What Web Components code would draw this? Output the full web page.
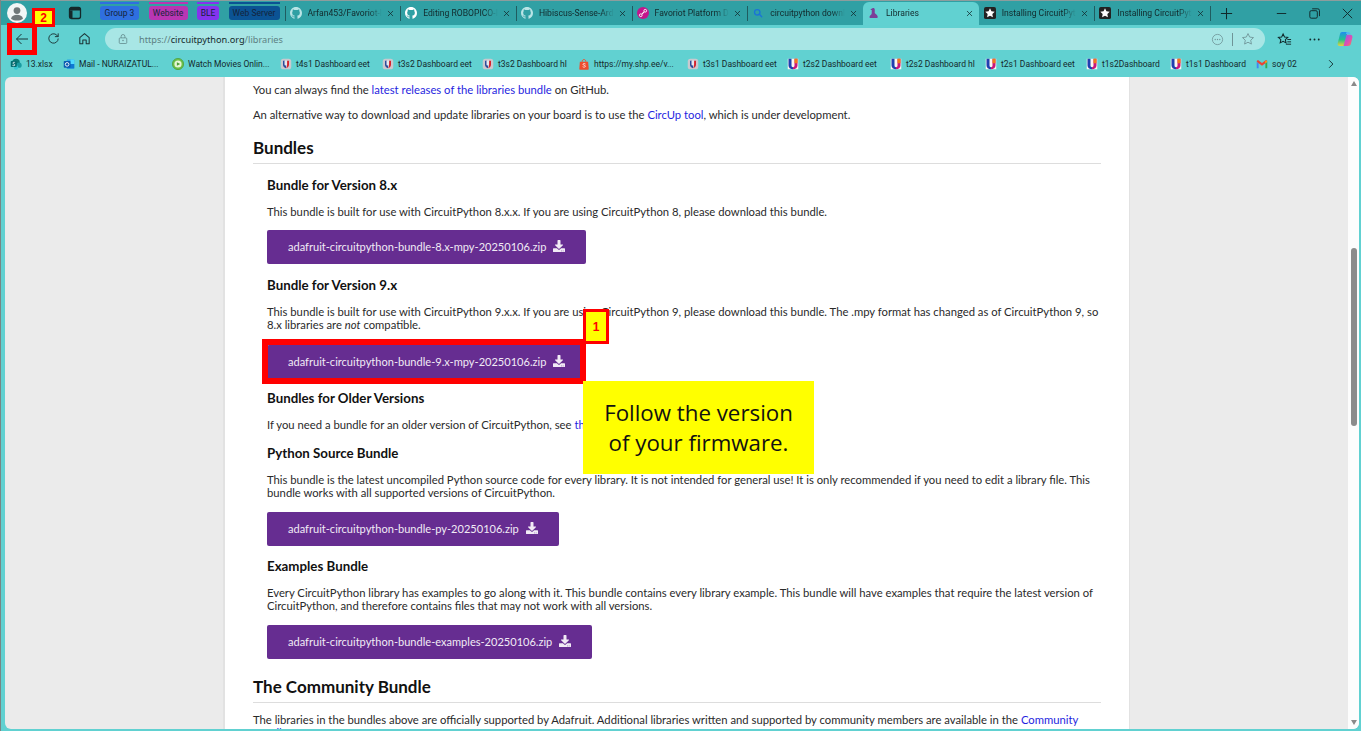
<!DOCTYPE html>
<html>
<head>
<meta charset="utf-8">
<title>Libraries</title>
<style>
  html, body { margin: 0; padding: 0; width: 1361px; height: 731px; overflow: hidden; background: #61d1d1; }
</style>
</head>
<body>
<browser-window>
  <tab-strip slot="tabs">
    <tab-chip color="#2f6fe0" width="39">Group 3</tab-chip>
    <tab-chip color="#b936b3" width="39">Website</tab-chip>
    <tab-chip color="#8533ee" width="22">BLE</tab-chip>
    <tab-chip color="#0b5394" width="51">Web Server</tab-chip>
    <browser-tab icon="github-dim">Arfan453/Favoriot-IoT</browser-tab>
    <browser-tab icon="github">Editing ROBOPICO-IoT</browser-tab>
    <browser-tab icon="github-dim">Hibiscus-Sense-Arduino</browser-tab>
    <browser-tab icon="favoriot">Favoriot Platform Docs</browser-tab>
    <browser-tab icon="search">circuitpython download</browser-tab>
    <browser-tab icon="blinka" active>Libraries</browser-tab>
    <browser-tab icon="star-box" nosep>Installing CircuitPython</browser-tab>
    <browser-tab icon="star-box">Installing CircuitPython</browser-tab>
  </tab-strip>
  <nav-bar slot="nav"></nav-bar>
  <bookmark-bar slot="bookmarks">
    <book-mark icon="sharepoint" width="53">13.xlsx</book-mark>
    <book-mark icon="outlook" width="109">Mail - NURAIZATUL...</book-mark>
    <book-mark icon="movie" width="108">Watch Movies Onlin...</book-mark>
    <book-mark icon="u-gray" width="102">t4s1 Dashboard eet</book-mark>
    <book-mark icon="u-gray" width="100">t3s2 Dashboard eet</book-mark>
    <book-mark icon="u-gray" width="96">t3s2 Dashboard hl</book-mark>
    <book-mark icon="shopee" width="109">https://my.shp.ee/v...</book-mark>
    <book-mark icon="u-gray" width="100">t3s1 Dashboard eet</book-mark>
    <book-mark icon="u-color" width="103">t2s2 Dashboard eet</book-mark>
    <book-mark icon="u-color" width="95">t2s2 Dashboard hl</book-mark>
    <book-mark icon="u-color" width="101">t2s1 Dashboard eet</book-mark>
    <book-mark icon="u-color" width="84">t1s2Dashboard</book-mark>
    <book-mark icon="u-color" width="86">t1s1 Dashboard</book-mark>
    <book-mark icon="gmail" width="50">soy 02</book-mark>
  </bookmark-bar>
  <doc-page slot="page">
    <doc-p style="margin-top:0">You can always find the <a href="#">latest releases of the libraries bundle</a> on GitHub.</doc-p>
    <doc-p style="margin-top:11px">An alternative way to download and update libraries on your board is to use the <a href="#">CircUp tool</a>, which is under development.</doc-p>
    <doc-h2 style="margin-top:16px">Bundles</doc-h2>
    <bundle-block>
      <doc-h3>Bundle for Version 8.x</doc-h3>
      <doc-p>This bundle is built for use with CircuitPython 8.x.x. If you are using CircuitPython 8, please download this bundle.</doc-p>
      <dl-button style="margin-top:11px">adafruit-circuitpython-bundle-8.x-mpy-20250106.zip</dl-button>
      <doc-h3>Bundle for Version 9.x</doc-h3>
      <doc-p>This bundle is built for use with CircuitPython 9.x.x. If you are using CircuitPython 9, please download this bundle. The .mpy format has changed as of CircuitPython 9, so 8.x libraries are <em>not</em> compatible.</doc-p>
      <dl-button style="margin-top:13px">adafruit-circuitpython-bundle-9.x-mpy-20250106.zip</dl-button>
      <doc-h3 style="margin-top:11px">Bundles for Older Versions</doc-h3>
      <doc-p>If you need a bundle for an older version of CircuitPython, see <a href="#">the</a></doc-p>
      <doc-h3>Python Source Bundle</doc-h3>
      <doc-p>This bundle is the latest uncompiled Python source code for every library. It is not intended for general use! It is only recommended if you need to edit a library file. This bundle works with all supported versions of CircuitPython.</doc-p>
      <dl-button>adafruit-circuitpython-bundle-py-20250106.zip</dl-button>
      <doc-h3 style="margin-top:12px">Examples Bundle</doc-h3>
      <doc-p>Every CircuitPython library has examples to go along with it. This bundle contains every library example. This bundle will have examples that require the latest version of CircuitPython, and therefore contains files that may not work with all versions.</doc-p>
      <dl-button>adafruit-circuitpython-bundle-examples-20250106.zip</dl-button>
    </bundle-block>
    <doc-h2 style="margin-top:18px">The Community Bundle</doc-h2>
    <doc-p style="margin-top:10px">The libraries in the bundles above are officially supported by Adafruit. Additional libraries written and supported by community members are available in the <a href="#">Community Bundle</a>.</doc-p>
  </doc-page>
</browser-window>

<mark-box style="left:262px;top:339px;width:324px;height:45px"></mark-box>
<mark-box style="left:7px;top:23px;width:30px;height:32px" thick="5"></mark-box>
<mark-tag style="left:583px;top:309px;width:26px;height:35px">1</mark-tag>
<mark-tag style="left:32px;top:8px;width:23px;height:19px">2</mark-tag>
<note-box style="left:583px;top:381px;width:231px;height:93px">Follow the version<br>of your firmware.</note-box>

<script>
const OCTOCAT = 'M8 0C3.58 0 0 3.58 0 8c0 3.54 2.29 6.53 5.47 7.59.4.07.55-.17.55-.38 0-.19-.01-.82-.01-1.49-2.01.37-2.53-.49-2.69-.94-.09-.23-.48-.94-.82-1.13-.28-.15-.68-.52-.01-.53.63-.01 1.08.58 1.23.82.72 1.21 1.87.87 2.33.66.07-.52.28-.87.51-1.07-1.78-.2-3.64-.89-3.64-3.95 0-.87.31-1.59.82-2.15-.08-.2-.36-1.02.08-2.12 0 0 .67-.21 2.2.82.64-.18 1.32-.27 2-.27s1.36.09 2 .27c1.53-1.04 2.2-.82 2.2-.82.44 1.1.16 1.92.08 2.12.51.56.82 1.27.82 2.15 0 3.07-1.87 3.75-3.65 3.95.29.25.54.73.54 1.48 0 1.07-.01 1.93-.01 2.2 0 .21.15.46.55.38A8.013 8.013 0 0016 8c0-4.42-3.58-8-8-8z';

// every icon is on a 16x16 box unless it says otherwise
const ICONS = {
  'github': `<path fill="#fff" d="${OCTOCAT}"/>`,
  'github-dim': `<path fill="#b9e4e6" d="${OCTOCAT}"/>`,
  'favoriot': `<circle cx="8" cy="8" r="8" fill="#c4148c"/><path d="M6.500 9.500L9.500 6.500" stroke="#fff" stroke-width="1.400"/><circle cx="5" cy="11" r="1.800" fill="none" stroke="#fff" stroke-width="1.200"/><circle cx="11" cy="5" r="1.800" fill="none" stroke="#fff" stroke-width="1.200"/>`,
  'search': `<circle cx="7" cy="7" r="3.600" fill="none" stroke="#1a73d8" stroke-width="1.800"/><path d="M9.800 9.800L13 13" stroke="#1a73d8" stroke-width="1.800" stroke-linecap="round"/>`,
  'blinka': `<path fill="#7b3f98" d="M6 1.500c1.600-.8 3 .2 3 1.700V8c0 1 3.500 2 4 5 .2 1.200-.6 1.800-2 1.800H4C2.500 14.800 1.700 14 2 13c.5-1.700 3-2.800 3-4.600V4H3.200C3.600 3 5 2 6 1.500z"/>`,
  'star-box': `<rect x="0" y="0" width="16" height="16" rx="2.500" fill="#222"/><path fill="#fff" d="M8 1.800l1.900 4 4.400.5-3.200 3 .8 4.400L8 11.600l-3.900 2.100.8-4.400-3.200-3 4.400-.5z"/>`,
  'sharepoint': `<circle cx="8" cy="6" r="5" fill="#0b7a75"/><circle cx="12" cy="9.500" r="3.600" fill="#1a9ba1"/><circle cx="8" cy="12.500" r="3" fill="#37c6d0"/><rect x="1" y="4" width="8" height="8" rx="1" fill="#036c70"/><path d="M6.800 6.200C6 5.500 3.800 5.600 3.800 6.800S6.600 8 6.600 9.300 4 10.500 3.200 9.700" fill="none" stroke="#fff" stroke-width="1"/>`,
  'outlook': `<rect x="5" y="2" width="10" height="12" rx="1" fill="#28a8ea"/><rect x="10" y="2" width="5" height="6" fill="#50d9ff"/><rect x="5" y="8" width="10" height="6" fill="#0f78d4"/><rect x="1" y="4" width="9" height="9" rx="1" fill="#0a5cb0"/><circle cx="5.500" cy="8.500" r="2.400" fill="none" stroke="#fff" stroke-width="1.200"/>`,
  'movie': `<circle cx="8" cy="8" r="7.500" fill="#6cc04a" stroke="#4f9c36"/><circle cx="8" cy="8" r="4.800" fill="#e7f5d8"/><path d="M6.500 5.600L11 8l-4.500 2.400z" fill="#4f9c36"/>`,
  'u-gray': `<rect x="1" y="1" width="14" height="14" rx="3.500" fill="#c9c9cf"/><path d="M4 3.500v5.200c0 3 2 4.500 4 4.800V3.500z" fill="#2c4c9c"/><path d="M12 3.500v5.200c0 3-2 4.500-4 4.800 1-1 1.400-2.500 1.400-4V3.500z" fill="#d5232d"/><rect x="6" y="3" width="3.400" height="7" rx="1.500" fill="#e8e8ee"/>`,
  'u-color': `<rect x="1" y="1" width="14" height="14" fill="#fbf7f2"/><path d="M2 1h4v9c0 1.500.8 2.300 2 2.300V15c-3.500 0-6-1.800-6-5z" fill="#1f3fb0"/><path d="M10 1h4v9c0 3.200-2.500 5-6 5v-2.700c1.200 0 2-.8 2-2.300z" fill="#c8187c"/><path d="M10 1h4v6h-4z" fill="#f07a1a"/>`,
  'shopee': `<path d="M2.500 5h11l.8 9.500c0 .6-.5 1-1 1H2.700c-.5 0-1-.4-1-1z" fill="#ee4d2d"/><path d="M5.500 5C5.500 1 10.500 1 10.500 5" fill="none" stroke="#ee4d2d" stroke-width="1.200"/><path d="M10 8c-.8-.9-3.400-.8-3.400.5s3.400 1 3.400 2.500-2.900 1.500-3.800.6" fill="none" stroke="#fff" stroke-width="1"/>`,
  'gmail': `<path d="M1 5v8.500h2.500V7z" fill="#4285f4"/><path d="M15 5v8.500h-2.500V7z" fill="#34a853"/><path d="M1 5c0-1.800 1.800-2.300 3-1.400L8 6.700l4-3.100c1.200-.9 3-.4 3 1.400L12.500 7 8 10.300 3.500 7z" fill="#ea4335"/><path d="M12.500 3.300l2.500 1.700-2.500 2z" fill="#fbbc04"/>`,
  'person': `<circle cx="8" cy="8" r="8" fill="#f2f6f6"/><circle cx="8" cy="6" r="2.700" fill="#6f7778"/><path d="M3.200 12.500c.5-2.400 2.500-3.200 4.800-3.200s4.300.8 4.800 3.200c-1.200 1-3 1.500-4.800 1.500s-3.600-.5-4.800-1.500z" fill="#6f7778"/>`,
  'tabs': `<rect x="2.500" y="2.500" width="11" height="11" rx="2" fill="none" stroke="#14282a" stroke-width="1.300"/><path d="M2.500 5.500h11v-1a2 2 0 00-2-2h-7a2 2 0 00-2 2z" fill="#14282a"/><rect x="2.500" y="5.500" width="3" height="8" fill="#14282a"/>`,
  'back': `<path d="M14 8H2.500M7.500 3L2.500 8l5 5" fill="none" stroke="#1d3436" stroke-width="1"/>`,
  'reload': `<path d="M13 8a5 5 0 11-1.500-3.600L13 6M13 2.500V6H9.500" fill="none" stroke="#1d3436" stroke-width="1"/>`,
  'home': `<path d="M3 7l5-4.300L13 7v6.500H9.800V9.500H6.200v4H3z" fill="none" stroke="#1d3436" stroke-width="1.100" stroke-linejoin="round"/>`,
  'lock': `<rect x="3" y="6.500" width="10" height="7.500" rx="1.200" fill="none" stroke="#5d8487" stroke-width="1"/><path d="M5.500 6.500V4.500a2.500 2.500 0 015 0v2" fill="none" stroke="#5d8487"/><circle cx="8" cy="10" r=".9" fill="#5d8487"/>`,
  'page-info': `<circle cx="8" cy="8" r="6.300" fill="none" stroke="#6f9497" stroke-width="1"/><circle cx="5.200" cy="8" r=".8" fill="#6f9497"/><circle cx="8" cy="8" r=".8" fill="#6f9497"/><circle cx="10.800" cy="8" r=".8" fill="#6f9497"/>`,
  'star': `<path d="M8 1.800l1.900 4 4.400.6-3.200 3 .8 4.400L8 11.700l-3.900 2.100.8-4.400-3.200-3 4.400-.6z" fill="none" stroke="#6f9497" stroke-width="1"/>`,
  'fav-list': `<path d="M6.500 2l1.500 3.300 3.500.4-2.600 2.400.7 3.500-3.100-1.700-3.100 1.700.7-3.500L1.500 5.700 5 5.300z" fill="none" stroke="#10282a" stroke-width="1.100"/><path d="M11 8h4M11 10.500h4M9.500 13h5.500" stroke="#10282a" stroke-width="1"/>`,
  'more': `<circle cx="3.500" cy="8" r="1" fill="#10282a"/><circle cx="8" cy="8" r="1" fill="#10282a"/><circle cx="12.500" cy="8" r="1" fill="#10282a"/>`,
  'copilot': `<defs><linearGradient id="cp1" x1="0" y1="0" x2="0" y2="1"><stop offset="0" stop-color="#1f8ff0"/><stop offset=".55" stop-color="#23c48c"/><stop offset="1" stop-color="#e9d33a"/></linearGradient><linearGradient id="cp2" x1="0" y1="0" x2="1" y2="1"><stop offset="0" stop-color="#8a5cf0"/><stop offset=".6" stop-color="#e24fb0"/><stop offset="1" stop-color="#f58a3a"/></linearGradient></defs><path d="M5 1h5.500L7.500 15H3C1.200 15 .3 13.800.7 12.300L3 3C3.300 1.800 4 1 5 1z" fill="url(#cp1)"/><path d="M6.500 15H11c1.500 0 2.500-1 2.900-2.300L15.400 6.500c.3-1.600-.7-2.700-2-2.700H9.500z" fill="url(#cp2)"/><path d="M9.500 1h1.700c1.300 0 2.100.8 2.300 2H9z" fill="#4fb8f4"/>`,
  'chevron': `<path d="M5.500 3l5 5-5 5" fill="none" stroke="#10282a" stroke-width="1.200"/>`,
  'plus': `<path d="M8 2v12M2 8h12" stroke="#10282a" stroke-width="1.100"/>`,
  'minus': `<path d="M3 8h10" stroke="#10282a" stroke-width="1"/>`,
  'restore': `<rect x="3" y="5" width="8" height="8" rx="1.500" fill="none" stroke="#10282a" stroke-width="1"/><path d="M5.500 3h6a1.800 1.800 0 011.800 1.800v6" fill="none" stroke="#10282a" stroke-width="1"/>`,
  'close': `<path d="M3 3l10 10M13 3L3 13" stroke="#10282a" stroke-width="1"/>`,
  'tab-close': `<path d="M3.500 3.500l9 9M12.500 3.500l-9 9" stroke="#10282a" stroke-width="1.300"/>`,
  'download': `<path transform="scale(.03125)" fill="currentColor" d="M216 0h80c13.300 0 24 10.700 24 24v168h87.700c17.800 0 26.700 21.500 14.100 34.100L269.700 378.300c-7.500 7.500-19.800 7.500-27.300 0L90.100 226.100c-12.600-12.600-3.700-34.100 14.100-34.100H192V24c0-13.300 10.700-24 24-24zm296 376v112c0 13.300-10.700 24-24 24H24c-13.300 0-24-10.700-24-24V376c0-13.300 10.700-24 24-24h146.700l49 49c20.100 20.100 52.500 20.100 72.600 0l49-49H488c13.300 0 24 10.700 24 24zm-124 88c0-11-9-20-20-20s-20 9-20 20 9 20 20 20 20-9 20-20zm64 0c0-11-9-20-20-20s-20 9-20 20 9 20 20 20 20-9 20-20z"/>`
};

function svgIcon(name, size) {
  return `<svg width="${size}" height="${size}" viewBox="0 0 16 16" style="display:block;flex:none">${ICONS[name]}</svg>`;
}

const CHROME_FONT = `Roboto, "Noto Sans", sans-serif`;
const PAGE_FONT = `Lato, Inter, sans-serif`;

class BrowserWindow extends HTMLElement {
  connectedCallback() {
    this.attachShadow({ mode: 'open' });
    this.shadowRoot.innerHTML = `
      <style>
        :host { display: flex; flex-direction: column; width: 1361px; height: 731px; background: #61d1d1; border-left: 1px solid #7a8585; box-sizing: border-box; font-family: ${CHROME_FONT}; }
        .view { flex: 1; min-height: 0; padding: 0 2px 2px 4px; display: flex; }
      </style>
      <slot name="tabs"></slot>
      <slot name="nav"></slot>
      <slot name="bookmarks"></slot>
      <div class="view"><slot name="page"></slot></div>
    `;
  }
}

class TabStrip extends HTMLElement {
  connectedCallback() {
    this.attachShadow({ mode: 'open' });
    this.shadowRoot.innerHTML = `
      <style>
        :host { display: flex; align-items: flex-end; height: 25px; padding-left: 6px; background: #30a0a4; border-top: 1px solid #8d9d9d; box-sizing: border-box; }
        .icon { align-self: center; margin-bottom: 1px; }
        .profile { margin-right: 40px; }
        .tabview { margin-right: 17px; }
        .chips { display: flex; align-self: flex-start; gap: 9.500px; margin: 1px 5px 0 0; }
        .plus { align-self: center; margin: 0 40px 0 8px; }
        .sep { align-self: center; width: 1px; height: 15px; background: #1f5c60; margin-left: -0.500px; }
        .ctrl { align-self: center; display: flex; gap: 18px; }
      </style>
      <div class="icon profile">${svgIcon('person', 20)}</div>
      <div class="icon tabview">${svgIcon('tabs', 16)}</div>
      <div class="chips"><slot name="chip"></slot></div>
      <slot></slot>
      <div class="sep"></div>
      <div class="plus">${svgIcon('plus', 15)}</div>
      <div class="ctrl">${svgIcon('minus', 15)}${svgIcon('restore', 15)}${svgIcon('close', 15)}</div>
    `;
    this.querySelectorAll('tab-chip').forEach(c => c.slot = 'chip');
  }
}

class TabChip extends HTMLElement {
  connectedCallback() {
    const color = this.getAttribute('color');
    const w = this.getAttribute('width');
    this.attachShadow({ mode: 'open' });
    this.shadowRoot.innerHTML = `
      <style>
        :host { display: block; width: ${w}px; }
        .line { height: 1.500px; background: ${color}; margin-bottom: 2.500px; }
        .body { height: 14px; background: ${color}; border-radius: 3px; color: #14243a; font-size: 8.500px; line-height: 14px; text-align: center; white-space: nowrap; overflow: hidden; }
      </style>
      <div class="line"></div>
      <div class="body"><slot></slot></div>
    `;
  }
}

class BrowserTab extends HTMLElement {
  connectedCallback() {
    const active = this.hasAttribute('active');
    const sep = !active && !this.hasAttribute('nosep');
    this.attachShadow({ mode: 'open' });
    this.shadowRoot.innerHTML = `
      <style>
        :host { display: flex; align-items: center; width: 115.700px; height: 23px; box-sizing: border-box; padding: 0 5px 1px 0; ${active ? 'background:#61d1d1;border-radius:6px 6px 0 0;' : ''} }
        .sep { width: 1px; height: 15px; background: ${sep ? '#1f5c60' : 'transparent'}; margin-right: 4px; flex: none; }
        .ico { flex: none; margin-right: 6px; }
        .label { flex: 1; min-width: 0; overflow: hidden; white-space: nowrap; font-size: 8.600px; color: #12292b; -webkit-mask-image: linear-gradient(90deg, #000 82%, transparent 100%); mask-image: linear-gradient(90deg, #000 82%, transparent 100%); }
        .x { flex: none; margin: 0 0 0 4px; }
      </style>
      <span class="sep"></span>
      <span class="ico">${svgIcon(this.getAttribute('icon'), 12)}</span>
      <span class="label"><slot></slot></span>
      <span class="x">${svgIcon('tab-close', 9)}</span>
    `;
  }
}

class NavBar extends HTMLElement {
  connectedCallback() {
    this.attachShadow({ mode: 'open' });
    this.shadowRoot.innerHTML = `
      <style>
        :host { display: flex; align-items: center; height: 25px; padding: 3px 0 0 13px; box-sizing: border-box; background: #61d1d1; }
        .btn { flex: none; }
        .left { display: flex; gap: 16px; margin-right: 13px; }
        .addr { flex: none; width: 1160px; height: 22px; display: flex; align-items: center; background: #a8e6e5; border-radius: 11px; box-sizing: border-box; padding: 0 10px 0 12px; }
        .url { flex: 1; margin-left: 10px; font-family: "Noto Sans", sans-serif; font-size: 9.200px; color: #5c7f82; }
        .url b { font-weight: 400; color: #14292b; }
        .div { width: 1px; height: 13px; background: #6f9497; margin: 0 8px; }
        .right { display: flex; align-items: center; margin-left: 12px; gap: 15px; }
      </style>
      <div class="left">${svgIcon('back', 16)}${svgIcon('reload', 15)}${svgIcon('home', 15)}</div>
      <div class="addr">
        ${svgIcon('lock', 12)}
        <span class="url">https://<b>circuitpython.org</b>/libraries</span>
        ${svgIcon('page-info', 13)}
        <span class="div"></span>
        ${svgIcon('star', 14)}
      </div>
      <div class="right">${svgIcon('fav-list', 15)}${svgIcon('more', 15)}${svgIcon('copilot', 16)}</div>
    `;
  }
}

class BookmarkBar extends HTMLElement {
  connectedCallback() {
    this.attachShadow({ mode: 'open' });
    this.shadowRoot.innerHTML = `
      <style>
        :host { display: flex; align-items: center; height: 27px; padding-left: 9px; box-sizing: border-box; background: #61d1d1; }
        .more { margin-left: 19px; }
      </style>
      <slot></slot>
      <div class="more">${svgIcon('chevron', 12)}</div>
    `;
  }
}

class BookMark extends HTMLElement {
  connectedCallback() {
    this.attachShadow({ mode: 'open' });
    this.shadowRoot.innerHTML = `
      <style>
        :host { display: flex; align-items: center; flex: none; width: ${this.getAttribute('width')}px; gap: 4px; font-size: 8.500px; color: #14292b; white-space: nowrap; overflow: hidden; }
      </style>
      ${svgIcon(this.getAttribute('icon'), 12)}
      <span><slot></slot></span>
    `;
  }
}

class DocPage extends HTMLElement {
  connectedCallback() {
    this.attachShadow({ mode: 'open' });
    this.shadowRoot.innerHTML = `
      <style>
        :host { display: flex; flex: 1; min-width: 0; height: 100%; border-radius: 6px; overflow: hidden; background: #ebebeb; font-family: ${PAGE_FONT}; color: #2a2a2a; }
        .gutter { flex: none; width: 218px; }
        .main { flex: none; width: 907px; box-sizing: border-box; height: 100%; overflow: hidden; background: #fff; padding: 6px 28px 0 28px; border-left: 2px solid #e2e2e2; border-right: 1px solid #e2e2e2; }
        .right { flex: 1; }
        .bar { flex: none; width: 11px; background: #fdfdfd; position: relative; display: flex; flex-direction: column; align-items: center; justify-content: space-between; padding: 4px 0; box-sizing: border-box; }
        .tri { width: 0; height: 0; border-left: 3.500px solid transparent; border-right: 3.500px solid transparent; }
        .up { border-bottom: 5px solid #8a8a8a; }
        .down { border-top: 5px solid #8a8a8a; }
        .thumb { position: absolute; left: 2.500px; top: 171px; width: 6px; height: 178px; border-radius: 3px; background: #8c8c8c; }
      </style>
      <div class="gutter"></div>
      <div class="main"><slot></slot></div>
      <div class="right"></div>
      <div class="bar"><span class="tri up"></span><span class="thumb"></span><span class="tri down"></span></div>
    `;
  }
}

class BundleBlock extends HTMLElement {
  connectedCallback() {
    this.attachShadow({ mode: 'open' });
    this.shadowRoot.innerHTML = `
      <style>:host { display: block; padding-left: 14px; }</style>
      <slot></slot>
    `;
  }
}

class DocH2 extends HTMLElement {
  connectedCallback() {
    this.attachShadow({ mode: 'open' });
    this.shadowRoot.innerHTML = `
      <style>
        :host { display: block; font-size: 17px; font-weight: 700; line-height: 20px; color: #111; padding-bottom: 5px; border-bottom: 1px solid #ddd; }
      </style>
      <slot></slot>
    `;
  }
}

class DocH3 extends HTMLElement {
  connectedCallback() {
    this.attachShadow({ mode: 'open' });
    this.shadowRoot.innerHTML = `
      <style>
        :host { display: block; margin-top: 13px; font-size: 13.300px; font-weight: 700; line-height: 16px; color: #111; }
      </style>
      <slot></slot>
    `;
  }
}

class DocP extends HTMLElement {
  connectedCallback() {
    this.attachShadow({ mode: 'open' });
    this.shadowRoot.innerHTML = `
      <style>
        :host { display: block; margin-top: 12px; padding-bottom: 1px; font-size: 11.280px; line-height: 13px; color: #2a2a2a; }
        ::slotted(a) { color: #1f1fe0; text-decoration: none; }
      </style>
      <slot></slot>
    `;
  }
}

class DlButton extends HTMLElement {
  connectedCallback() {
    this.attachShadow({ mode: 'open' });
    this.shadowRoot.innerHTML = `
      <style>
        :host { display: flex; width: max-content; align-items: center; gap: 7px; height: 34px; margin-top: 12px; padding: 0 21px 2px; box-sizing: border-box; background: #662d91; border-radius: 2px; color: #f1ebf5; font-size: 11.050px; }
      </style>
      <slot></slot>
      ${svgIcon('download', 12)}
    `;
  }
}

class MarkBox extends HTMLElement {
  connectedCallback() {
    this.attachShadow({ mode: 'open' });
    this.shadowRoot.innerHTML = `
      <style>
        :host { position: absolute; box-sizing: border-box; border: ${this.getAttribute('thick') || 6}px solid #ff0000; }
      </style>
    `;
  }
}

class MarkTag extends HTMLElement {
  connectedCallback() {
    this.attachShadow({ mode: 'open' });
    this.shadowRoot.innerHTML = `
      <style>
        :host { position: absolute; box-sizing: border-box; display: flex; align-items: center; justify-content: center; background: #ffff00; border: 3px solid #ff0000; color: #ff0000; font: 700 12px "Liberation Sans", sans-serif; }
      </style>
      <slot></slot>
    `;
  }
}

class NoteBox extends HTMLElement {
  connectedCallback() {
    this.attachShadow({ mode: 'open' });
    this.shadowRoot.innerHTML = `
      <style>
        :host { position: absolute; box-sizing: border-box; display: flex; align-items: center; justify-content: center; text-align: center; background: #ffff00; color: #111; font: 400 22.300px/30px "Open Sans", sans-serif; }
      </style>
      <div><slot></slot></div>
    `;
  }
}

customElements.define('browser-window', BrowserWindow);
customElements.define('tab-strip', TabStrip);
customElements.define('tab-chip', TabChip);
customElements.define('browser-tab', BrowserTab);
customElements.define('nav-bar', NavBar);
customElements.define('bookmark-bar', BookmarkBar);
customElements.define('book-mark', BookMark);
customElements.define('doc-page', DocPage);
customElements.define('bundle-block', BundleBlock);
customElements.define('doc-h2', DocH2);
customElements.define('doc-h3', DocH3);
customElements.define('doc-p', DocP);
customElements.define('dl-button', DlButton);
customElements.define('mark-box', MarkBox);
customElements.define('mark-tag', MarkTag);
customElements.define('note-box', NoteBox);
</script>
</body>
</html>
